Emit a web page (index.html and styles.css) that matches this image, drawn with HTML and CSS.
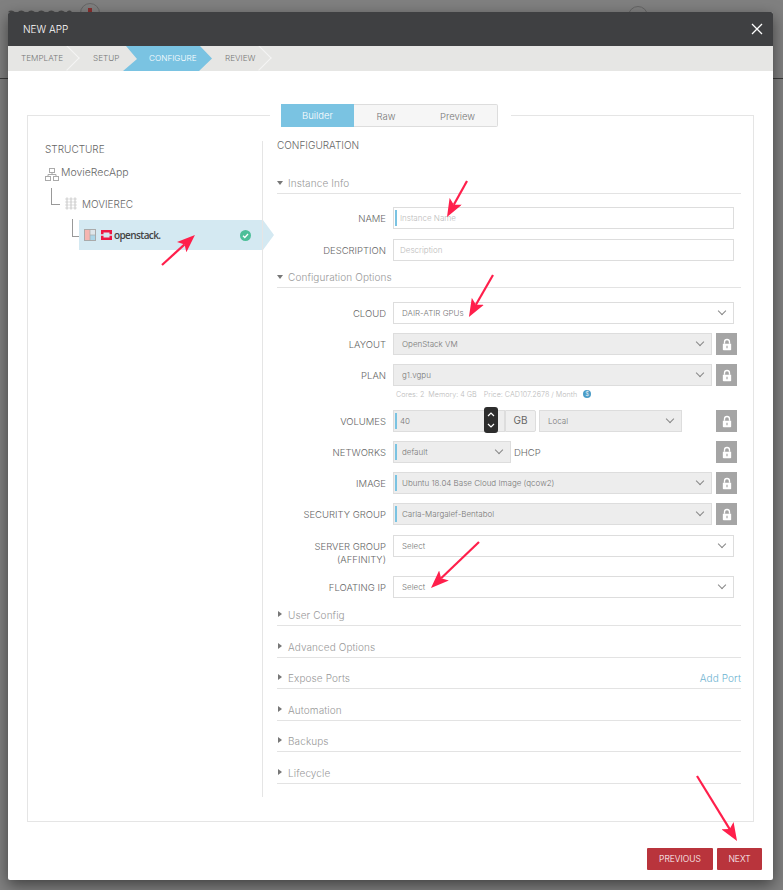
FILE: index.html
```html
<!DOCTYPE html>
<html lang="en">
<head>
  <meta charset="UTF-8">
  <title>New App</title>
  <link rel="stylesheet" href="styles.css">
</head>
<body>
  <svg class="sprite" width="0" height="0">
    <symbol id="lock" viewBox="0 0 12 14">
      <path d="M3 6V4a3 3 0 0 1 6 0v2" fill="none" stroke="#fff" stroke-width="1.6"/>
      <path d="M1 6h10v7a1 1 0 0 1-1 1H2a1 1 0 0 1-1-1z" fill="#fff"/>
      <rect x="5.3" y="8.5" width="1.4" height="3" fill="#a5a5a5"/>
    </symbol>
  </svg>

  <div class="backdrop">
    <div class="topbar">
      <svg class="brand" width="64" height="4" viewBox="0 0 64 4" fill="none" stroke="#4a4a4a" stroke-width="1.5">
        <path d="M0 4q3-3.500 7 0M10 4q3-3.500 7 0M20 4q3-3.500 7 0M30 4q3-3.500 7 0M40 4q3-3.500 7 0M50 4q3-3.500 7 0M59 4q2-3.500 5 0"/>
      </svg>
      <span class="brand-mark"><i class="leaf"></i></span>
      <span class="user-mark"></span>
    </div>
  </div>

  <div class="modal">
    <div class="modal-header">
      <span>NEW APP</span>
      <svg class="close" width="12" height="12" viewBox="0 0 12 12"><path d="M1 1l10 10M11 1L1 11" stroke="#fff" stroke-width="1.3"/></svg>
    </div>

    <div class="steps">
      <div class="step step-template step-chev">TEMPLATE</div>
      <div class="step step-setup">SETUP</div>
      <div class="step step-active">CONFIGURE</div>
      <div class="step step-review step-chev">REVIEW</div>
    </div>

    <div class="frame">
      <div class="tabs-wrap">
        <div class="tabs">
          <div class="tab tab-builder">Builder</div>
          <div class="tab tab-raw">Raw</div>
          <div class="tab tab-preview">Preview</div>
        </div>
      </div>

      <div class="columns">
        <div class="structure">
          <div class="col-title">STRUCTURE</div>
          <div class="tree-app">
            <svg width="14" height="13" viewBox="0 0 14 13" fill="none" stroke="#aaa">
              <rect x="4.5" y="0.5" width="5" height="4"/>
              <rect x="0.5" y="8.5" width="5" height="4"/>
              <rect x="8.5" y="8.5" width="5" height="4"/>
              <path d="M7 4.5v2M3 8.500v-2h8v2"/>
            </svg>
            <span>MovieRecApp</span>
          </div>
          <div class="tree-tier">
            <span class="elbow"></span>
            <svg width="12" height="13" viewBox="0 0 12 13" fill="none" stroke="#bbb" stroke-width="0.7">
              <circle cx="2" cy="2" r="1.1"/><circle cx="6" cy="2" r="1.1"/><circle cx="10" cy="2" r="1.1"/>
              <circle cx="2" cy="5" r="1.1"/><circle cx="6" cy="5" r="1.1"/><circle cx="10" cy="5" r="1.1"/>
              <circle cx="2" cy="8" r="1.1"/><circle cx="6" cy="8" r="1.1"/><circle cx="10" cy="8" r="1.1"/>
              <circle cx="2" cy="11" r="1.1"/><circle cx="6" cy="11" r="1.1"/><circle cx="10" cy="11" r="1.1"/>
            </svg>
            <span>MOVIEREC</span>
          </div>
          <div class="tree-instance">
            <span class="elbow elbow-small"></span>
            <div class="instance">
              <svg width="12" height="12" viewBox="0 0 12 12">
                <rect x="0" y="0" width="6" height="12" fill="#f5b5b0"/>
                <rect x="6" y="0" width="6" height="6" fill="#dfe6ea"/>
                <rect x="6" y="6" width="6" height="6" fill="#acd6e8"/>
                <rect x="0.5" y="0.5" width="11" height="11" fill="none" stroke="#aaa"/>
                <path d="M6 0v12M6 6h6" stroke="#aaa" stroke-width="0.7"/>
              </svg>
              <svg class="os-logo" width="11" height="10" viewBox="0 0 11 10">
                <path d="M0 0h11v4.200H8.500V2.500h-6v1.700H0zM0 5.800h2.500v1.700h6V5.800H11V10H0z" fill="#ed1944"/>
              </svg>
              <span class="os-name">openstack.</span>
              <svg class="check" width="11" height="11" viewBox="0 0 11 11">
                <circle cx="5.500" cy="5.500" r="5.500" fill="#4dbf98"/>
                <path d="M3 5.700l1.800 1.800L8 4" fill="none" stroke="#fff" stroke-width="1.300"/>
              </svg>
            </div>
          </div>
        </div>

        <div class="config">
          <div class="config-title">CONFIGURATION</div>

          <div class="section section-first section-open">Instance Info</div>
          <div class="rows rows-info">
            <div class="row">
              <label class="label">NAME</label>
              <div class="field field-wide req placeholder">Instance Name</div>
            </div>
            <div class="row">
              <label class="label">DESCRIPTION</label>
              <div class="field field-wide placeholder">Description</div>
            </div>
          </div>

          <div class="section section-open section-options">Configuration Options</div>
          <div class="rows">
            <div class="row">
              <label class="label">CLOUD</label>
              <div class="field field-wide sel">DAIR-ATIR GPUs</div>
            </div>
            <div class="row">
              <label class="label">LAYOUT</label>
              <div class="field sel off">OpenStack VM</div>
              <div class="lock"><svg width="10" height="13"><use href="#lock"/></svg></div>
            </div>
            <div class="row">
              <label class="label">PLAN</label>
              <div class="field sel off">g1.vgpu</div>
              <div class="lock"><svg width="10" height="13"><use href="#lock"/></svg></div>
            </div>
            <div class="hint">
              <span>Cores: 2</span><span>Memory: 4 GB</span><span class="hint-price">Price: CAD107.2678 / Month</span>
              <i class="info">$</i>
            </div>
            <div class="row">
              <label class="label">VOLUMES</label>
              <div class="volume">
                <div class="field req off vol-size">40</div>
                <div class="spinner">
                  <svg width="8" height="20" viewBox="0 0 8 20" fill="none" stroke="#fff" stroke-width="1.200"><path d="M1 6l3-3 3 3M1 14l3 3 3-3"/></svg>
                </div>
                <div class="vol-unit">GB</div>
                <div class="field sel off vol-type">Local</div>
              </div>
              <div class="lock"><svg width="10" height="13"><use href="#lock"/></svg></div>
            </div>
            <div class="row">
              <label class="label">NETWORKS</label>
              <div class="volume">
                <div class="field sel req off net">default</div>
                <span class="dhcp">DHCP</span>
              </div>
              <div class="lock"><svg width="10" height="13"><use href="#lock"/></svg></div>
            </div>
            <div class="row">
              <label class="label">IMAGE</label>
              <div class="field sel req off">Ubuntu 18.04 Base Cloud Image (qcow2)</div>
              <div class="lock"><svg width="10" height="13"><use href="#lock"/></svg></div>
            </div>
            <div class="row">
              <label class="label">SECURITY GROUP</label>
              <div class="field sel req off">Carla-Margalef-Bentabol</div>
              <div class="lock"><svg width="10" height="13"><use href="#lock"/></svg></div>
            </div>
            <div class="row row-tall">
              <label class="label">SERVER GROUP<br>(AFFINITY)</label>
              <div class="field field-wide sel">Select</div>
            </div>
            <div class="row">
              <label class="label">FLOATING IP</label>
              <div class="field field-wide sel">Select</div>
            </div>
          </div>

          <div class="section section-user">User Config</div>
          <div class="section">Advanced Options</div>
          <div class="section"><span>Expose Ports</span><a class="add-port">Add Port</a></div>
          <div class="section">Automation</div>
          <div class="section">Backups</div>
          <div class="section">Lifecycle</div>
        </div>
      </div>
    </div>

    <div class="actions">
      <button class="btn btn-prev">PREVIOUS</button>
      <button class="btn btn-next">NEXT</button>
    </div>
  </div>

  <!-- annotation arrows drawn over the screenshot -->
  <svg class="arrows" width="783" height="890" viewBox="0 0 783 890">
    <defs>
      <marker id="head" markerUnits="userSpaceOnUse" markerWidth="18" markerHeight="14" viewBox="0 0 18 14" refX="4" refY="7" orient="auto">
        <path d="M0 0L18 7L0 14L4 7z" fill="#ff1f4b"/>
      </marker>
    </defs>
    <g stroke="#ff1f4b" stroke-width="2.200" marker-end="url(#head)">
      <line x1="467" y1="181" x2="453.800" y2="204.800"/>
      <line x1="493" y1="275" x2="475.900" y2="304.800"/>
      <line x1="162" y1="265" x2="184.600" y2="244.400"/>
      <line x1="479" y1="542" x2="441.100" y2="578.300"/>
      <line x1="697" y1="776" x2="729.700" y2="829.100"/>
    </g>
  </svg>
</body>
</html>
```

FILE: styles.css
```css
html, body {
  margin: 0;
  height: 890px;
  overflow: hidden;
}
body {
  background-color: #808080;
  font-family: Inter, "Open Sans", sans-serif;
  font-weight: 300;
  color: #666;
  position: relative;
}
.sprite {
  display: block;
  height: 0;
}

/* page behind the dialog */
.topbar {
  height: 79px;
  border-bottom: 1px solid #3a3a3a;
  position: relative;
  box-sizing: border-box;
}
.brand {
  position: absolute;
  left: 8px;
  top: 9px;
}
.brand-mark, .user-mark {
  position: absolute;
  border: 1px solid #666;
  border-radius: 50%;
}
.brand-mark {
  left: 80px;
  top: 3px;
  width: 18px;
  height: 18px;
}
.leaf {
  position: absolute;
  left: 7px;
  top: 4px;
  width: 4px;
  height: 6px;
  background-color: #8c3030;
}
.user-mark {
  left: 628px;
  top: 6px;
  width: 18px;
  height: 18px;
}

/* dialog */
.modal {
  position: absolute;
  left: 8px;
  top: 12px;
  width: 765px;
  height: 868px;
  background-color: #fff;
  border-radius: 2px;
  box-shadow: 0 5px 15px rgba(0, 0, 0, 0.5);
}
.modal-header {
  height: 34px;
  background-color: #3f4042;
  color: #fff;
  font-size: 10px;
  display: flex;
  align-items: center;
  justify-content: space-between;
  padding: 0 10px 0 15px;
  border-radius: 2px 2px 0 0;
}
.close {
  display: block;
}
.steps {
  height: 25px;
  background-color: #e6e6e4;
  display: flex;
  overflow: hidden;
  font-size: 8.200px;
  color: #777;
}
.step {
  box-sizing: border-box;
  padding-left: 13px;
  line-height: 25px;
  position: relative;
}
.step-template {
  width: 72px;
}
.step-setup {
  width: 43px;
}
.step-review {
  width: 60px;
}
.step-active {
  width: 89px;
  padding-left: 26px;
  color: #fff;
  background-color: #7ac3e2;
  clip-path: polygon(3px 0, 77px 0, 89px 12.500px, 76px 25px, 0 25px, 14px 13px);
}
.step-chev::after {
  content: "";
  position: absolute;
  right: 4px;
  top: 3px;
  width: 18px;
  height: 18px;
  box-sizing: border-box;
  border-top: 1px solid #f5f5f5;
  border-right: 1px solid #f5f5f5;
  transform: rotate(45deg);
}

/* bordered frame with the tabs sitting on its top edge */
.frame {
  margin: 44px 19px 0;
  height: 707px;
  box-sizing: border-box;
  border: 1px solid #e5e5e5;
}
.tabs-wrap {
  width: 217px;
  margin: -12px auto 14px;
  padding: 0 13px 0 11px;
  background-color: #fff;
}
.tabs {
  display: flex;
  height: 23px;
  font-size: 9.500px;
  line-height: 23px;
  text-align: center;
  color: #777;
  background-color: #f6f6f6;
  box-sizing: border-box;
  border: 1px solid #ddd;
  border-left: 0;
  border-radius: 0 2px 2px 0;
}
.tab-builder {
  width: 73px;
  margin: -1px 0;
  height: 23px;
  color: #fff;
  background-color: #7ac3e2;
}
.tab-raw {
  width: 64px;
}
.tab-preview {
  width: 79px;
}
.columns {
  display: flex;
}

/* left tree */
.structure {
  width: 235px;
  height: 656px;
  box-sizing: border-box;
  border-right: 1px solid #e5e5e5;
  padding: 1px 0 0 17px;
  position: relative;
}
.col-title {
  font-size: 10px;
  line-height: 14px;
}
.tree-app {
  display: flex;
  align-items: center;
  gap: 2px;
  margin-top: 12px;
  font-size: 10.500px;
  line-height: 14px;
}
.tree-app span {
  margin-top: -3px;
}
.tree-app svg, .tree-tier svg {
  display: block;
}
.tree-tier {
  display: flex;
  align-items: center;
  gap: 5px;
  margin: 16px 0 0 6px;
  font-size: 10px;
}
.elbow {
  width: 8px;
  height: 16px;
  margin-top: -14px;
  border-left: 1px solid #999;
  border-bottom: 1px solid #999;
}
.tree-instance {
  display: flex;
  margin: 10px 0 0 27px;
}
.elbow-small {
  width: 6px;
  height: 17px;
  margin-top: -1px;
}
.instance {
  width: 184px;
  height: 30px;
  background-color: #d4e9f2;
  display: flex;
  align-items: center;
  padding-left: 5px;
  box-sizing: border-box;
  position: relative;
}
.instance::after {
  content: "";
  position: absolute;
  left: 184px;
  top: 0;
  border-left: 11px solid #d4e9f2;
  border-top: 15px solid transparent;
  border-bottom: 15px solid transparent;
}
.os-logo {
  margin-left: 5px;
}
.os-name {
  margin-left: 2px;
  font-family: "Open Sans", sans-serif;
  font-size: 10px;
  font-weight: 600;
  letter-spacing: -0.6px;
  color: #444;
}
.check {
  margin-left: auto;
  margin-right: 11px;
}

/* right form */
.config {
  width: 464px;
  margin-left: 14px;
}
.config-title {
  height: 8px;
  line-height: 8px;
  font-size: 10px;
}
.section {
  height: 22px;
  box-sizing: border-box;
  border-bottom: 1px solid #e3e3e3;
  margin-top: 9.500px;
  padding-left: 11px;
  font-size: 10px;
  line-height: 23px;
  letter-spacing: 0.1px;
  color: #999;
  display: flex;
  justify-content: space-between;
  position: relative;
}
.section::before {
  content: "";
  position: absolute;
  left: 1px;
  top: 7px;
  border-left: 4px solid #777;
  border-top: 3px solid transparent;
  border-bottom: 3px solid transparent;
}
.section-open::before {
  left: 0;
  top: 9px;
  border-top: 4px solid #777;
  border-left: 3px solid transparent;
  border-right: 3px solid transparent;
  border-bottom: 0;
}
.section-first {
  margin-top: 23px;
}
.section-options {
  margin-top: 5px;
}
.section-user {
  margin-top: 6px;
}
.add-port {
  color: #6db3d1;
}
.rows {
  display: flex;
  flex-direction: column;
  gap: 9px;
  margin-top: 14px;
  width: 460px;
}
.rows-info {
  margin-top: 13px;
  gap: 10px;
}
.row {
  display: flex;
  align-items: center;
}
.row-tall {
  align-items: flex-start;
  height: 32px;
  margin-top: 1px;
}
.row-tall .label {
  padding-top: 5px;
}
.label {
  width: 109px;
  margin-right: 7px;
  flex: none;
  text-align: right;
  font-size: 9.500px;
  line-height: 13px;
}
.field {
  flex: 1;
  height: 22px;
  box-sizing: border-box;
  border: 1px solid #ddd;
  padding-left: 8px;
  font-size: 8px;
  line-height: 20px;
  position: relative;
  color: #777;
}
.field-wide {
  margin-right: 3px;
}
.placeholder {
  padding-left: 6px;
  color: #bbb;
}
.off {
  background-color: #ededed;
}
.req::before {
  content: "";
  position: absolute;
  left: 1px;
  top: 2px;
  bottom: 2px;
  width: 2px;
  background-color: #7ac3e2;
}
.sel::after {
  content: "";
  position: absolute;
  right: 8px;
  top: 5px;
  width: 5px;
  height: 5px;
  border-right: 1px solid #888;
  border-bottom: 1px solid #888;
  transform: rotate(45deg);
}
.lock {
  width: 21px;
  height: 22px;
  margin-left: 4px;
  background-color: #a5a5a5;
  display: flex;
  align-items: center;
  justify-content: center;
}
.hint {
  height: 14px;
  margin-top: -8px;
  padding-left: 119px;
  display: flex;
  align-items: center;
  gap: 4px;
  font-size: 7.200px;
  color: #bbb;
}
.hint-price {
  margin-left: 3px;
}
.info {
  width: 8px;
  height: 8px;
  margin-left: 2px;
  border-radius: 50%;
  background-color: #4a9cc7;
  color: #fff;
  font-size: 6px;
  font-style: normal;
  line-height: 8px;
  text-align: center;
}
.volume {
  flex: 1;
  display: flex;
  align-items: center;
  position: relative;
}
.vol-size {
  flex: none;
  width: 112px;
  padding-left: 6px;
}
.spinner {
  position: absolute;
  left: 91px;
  top: -3px;
  width: 14px;
  height: 26px;
  background-color: #2d2d2d;
  border-radius: 3px;
  display: flex;
  align-items: center;
  justify-content: center;
}
.vol-unit {
  width: 31px;
  height: 22px;
  box-sizing: border-box;
  border: 1px solid #ddd;
  border-radius: 0 2px 2px 0;
  background-color: #efefef;
  text-align: center;
  font-size: 10px;
  font-weight: 400;
  line-height: 19px;
}
.vol-type {
  flex: none;
  width: 143px;
  margin-left: 3px;
}
.net {
  flex: none;
  width: 118px;
}
.dhcp {
  margin-left: 3px;
  font-size: 9.500px;
}

/* footer buttons */
.actions {
  display: flex;
  justify-content: flex-end;
  gap: 4px;
  margin: 26px 11px 0 0;
}
.btn {
  height: 22px;
  border: 0;
  border-radius: 1px;
  padding: 0;
  background-color: #b9343c;
  color: #fff;
  font-family: inherit;
  font-weight: 300;
  font-size: 8.500px;
}
.btn-prev {
  width: 66px;
}
.btn-next {
  width: 45px;
}
.arrows {
  position: absolute;
  left: 0;
  top: 0;
  pointer-events: none;
}
```
